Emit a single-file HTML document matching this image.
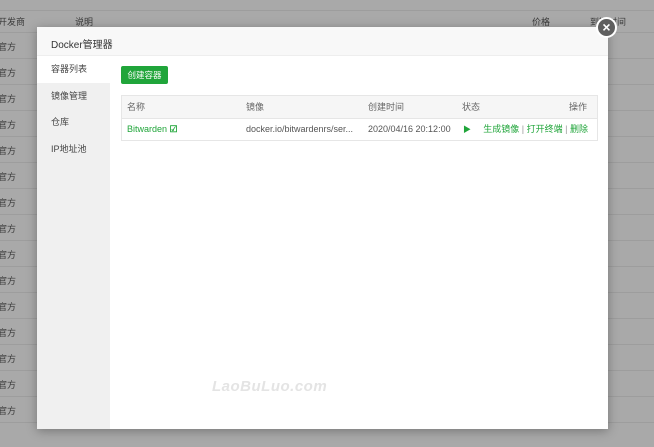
<!DOCTYPE html>
<html><head><meta charset="utf-8"><style>
*{margin:0;padding:0;box-sizing:border-box}
body{width:654px;height:447px;overflow:hidden;background:#a9a9a9;font-family:"Liberation Sans","Noto Sans CJK SC",sans-serif;font-size:9px;color:#333;position:relative}
.hl{position:absolute;left:0;width:654px;height:1px;background:#9d9d9d}
.bt{position:absolute;color:#3a3a3a;font-size:9px}
.dlg{position:absolute;left:37px;top:27px;width:571px;height:402px;background:#fff;box-shadow:0 2px 10px rgba(0,0,0,.3)}
.hd{height:29px;background:#f8f8f8;border-bottom:1px solid #eee;padding:9px 0 0 14px;font-size:10px;color:#333}
.sb{position:absolute;left:0;top:29px;width:73px;bottom:0;background:#f0f0f0}
.sb div{height:26.5px;line-height:26px;padding-left:14px;font-size:9px;color:#444}
.sb .on{background:#fff}
.btn{position:absolute;left:84px;top:39px;width:47px;height:18px;background:#20a53a;color:#fff;border-radius:2px;font-size:8.5px;line-height:18px;text-align:center}
.tb{position:absolute;left:84px;top:68px;width:477px;height:46px;border:1px solid #e6e6e6}
.th{height:23px;background:#f6f6f6;border-bottom:1px solid #e6e6e6;position:relative;color:#666}
.tr{height:22px;position:relative}
.c{position:absolute;top:4px;line-height:13px;white-space:nowrap}
.g{color:#20a53a}
.x{position:absolute;left:596px;top:17px;width:21px;height:21px;border-radius:50%;background:#5f5f5f;border:2px solid #fff;color:#fff;font-size:14px;line-height:16px;text-align:center;font-weight:bold}
.wm{position:absolute;left:212px;top:378px;font-size:15px;font-style:italic;font-weight:bold;color:#e4e4e4;letter-spacing:.5px}
</style></head><body>
<div class="hl" style="top:10px"></div>
<div class="bt" style="left:-2px;top:15px">开发商</div><div class="bt" style="left:75px;top:15px">说明</div>
<div class="bt" style="left:532px;top:15px">价格</div><div class="bt" style="left:590px;top:15px">到期时间</div>
<div class="hl" style="top:32px"></div>
<div class="hl" style="top:58px"></div><div class="hl" style="top:84px"></div><div class="hl" style="top:110px"></div><div class="hl" style="top:136px"></div><div class="hl" style="top:162px"></div><div class="hl" style="top:188px"></div><div class="hl" style="top:214px"></div><div class="hl" style="top:240px"></div><div class="hl" style="top:266px"></div><div class="hl" style="top:292px"></div><div class="hl" style="top:318px"></div><div class="hl" style="top:344px"></div><div class="hl" style="top:370px"></div><div class="hl" style="top:396px"></div><div class="hl" style="top:422px"></div>
<div class="bt" style="left:-2px;top:40px">官方</div><div class="bt" style="left:-2px;top:66px">官方</div><div class="bt" style="left:-2px;top:92px">官方</div><div class="bt" style="left:-2px;top:118px">官方</div><div class="bt" style="left:-2px;top:144px">官方</div><div class="bt" style="left:-2px;top:170px">官方</div><div class="bt" style="left:-2px;top:196px">官方</div><div class="bt" style="left:-2px;top:222px">官方</div><div class="bt" style="left:-2px;top:248px">官方</div><div class="bt" style="left:-2px;top:274px">官方</div><div class="bt" style="left:-2px;top:300px">官方</div><div class="bt" style="left:-2px;top:326px">官方</div><div class="bt" style="left:-2px;top:352px">官方</div><div class="bt" style="left:-2px;top:378px">官方</div><div class="bt" style="left:-2px;top:404px">官方</div>
<div class="dlg">
<div class="hd">Docker管理器</div>
<div class="sb"><div class="on">容器列表</div><div>镜像管理</div><div>仓库</div><div>IP地址池</div></div>
<div class="btn">创建容器</div>
<div class="tb">
<div class="th"><span class="c" style="left:5px;top:5px">名称</span><span class="c" style="left:124px;top:5px">镜像</span><span class="c" style="left:246px;top:5px">创建时间</span><span class="c" style="left:340px;top:5px">状态</span><span class="c" style="right:10px;top:5px">操作</span></div>
<div class="tr"><span class="c g" style="left:5px">Bitwarden <b style="font-size:9px">&#9745;</b></span><span class="c" style="left:124px;color:#555">docker.io/bitwardenrs/ser...</span><span class="c" style="left:246px;color:#555">2020/04/16 20:12:00</span><span class="c g" style="left:341px;font-size:8px">&#9654;</span><span class="c g" style="right:9px">生成镜像 <span style="color:#999">|</span> 打开终端 <span style="color:#999">|</span> 删除</span></div>
</div>
</div>
<div class="x">×</div>
<div class="wm">LaoBuLuo.com</div>
</body></html>
